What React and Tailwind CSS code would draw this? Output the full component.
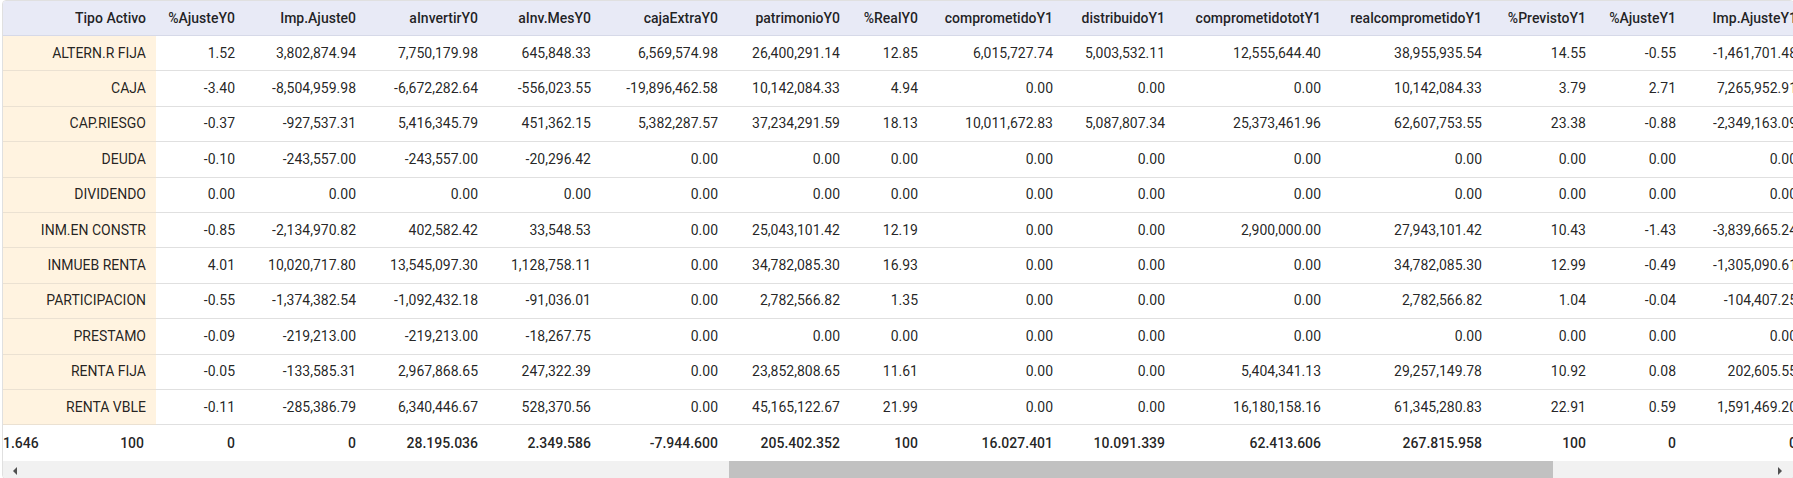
const columns = [
  { name: "Tipo Activo", w: "w-[153px]" },
  { name: "%AjusteY0", w: "w-[89px]" },
  { name: "Imp.Ajuste0", w: "w-[121px]" },
  { name: "aInvertirY0", w: "w-[122px]" },
  { name: "aInv.MesY0", w: "w-[113px]" },
  { name: "cajaExtraY0", w: "w-[127px]" },
  { name: "patrimonioY0", w: "w-[122px]" },
  { name: "%RealY0", w: "w-[78px]" },
  { name: "comprometidoY1", w: "w-[135px]" },
  { name: "distribuidoY1", w: "w-[112px]" },
  { name: "comprometidototY1", w: "w-[156px]" },
  { name: "realcomprometidoY1", w: "w-[161px]" },
  { name: "%PrevistoY1", w: "w-[104px]" },
  { name: "%AjusteY1", w: "w-[90px]" },
  { name: "Imp.AjusteY1", w: "w-[121px]" },
];

const Z = "0.00";

const rows = [
  ["ALTERN.R FIJA", "1.52", "3,802,874.94", "7,750,179.98", "645,848.33", "6,569,574.98", "26,400,291.14", "12.85", "6,015,727.74", "5,003,532.11", "12,555,644.40", "38,955,935.54", "14.55", "-0.55", "-1,461,701.48"],
  ["CAJA", "-3.40", "-8,504,959.98", "-6,672,282.64", "-556,023.55", "-19,896,462.58", "10,142,084.33", "4.94", Z, Z, Z, "10,142,084.33", "3.79", "2.71", "7,265,952.91"],
  ["CAP.RIESGO", "-0.37", "-927,537.31", "5,416,345.79", "451,362.15", "5,382,287.57", "37,234,291.59", "18.13", "10,011,672.83", "5,087,807.34", "25,373,461.96", "62,607,753.55", "23.38", "-0.88", "-2,349,163.09"],
  ["DEUDA", "-0.10", "-243,557.00", "-243,557.00", "-20,296.42", Z, Z, Z, Z, Z, Z, Z, Z, Z, Z],
  ["DIVIDENDO", Z, Z, Z, Z, Z, Z, Z, Z, Z, Z, Z, Z, Z, Z],
  ["INM.EN CONSTR", "-0.85", "-2,134,970.82", "402,582.42", "33,548.53", Z, "25,043,101.42", "12.19", Z, Z, "2,900,000.00", "27,943,101.42", "10.43", "-1.43", "-3,839,665.24"],
  ["INMUEB RENTA", "4.01", "10,020,717.80", "13,545,097.30", "1,128,758.11", Z, "34,782,085.30", "16.93", Z, Z, Z, "34,782,085.30", "12.99", "-0.49", "-1,305,090.61"],
  ["PARTICIPACION", "-0.55", "-1,374,382.54", "-1,092,432.18", "-91,036.01", Z, "2,782,566.82", "1.35", Z, Z, Z, "2,782,566.82", "1.04", "-0.04", "-104,407.25"],
  ["PRESTAMO", "-0.09", "-219,213.00", "-219,213.00", "-18,267.75", Z, Z, Z, Z, Z, Z, Z, Z, Z, Z],
  ["RENTA FIJA", "-0.05", "-133,585.31", "2,967,868.65", "247,322.39", Z, "23,852,808.65", "11.61", Z, Z, "5,404,341.13", "29,257,149.78", "10.92", "0.08", "202,605.55"],
  ["RENTA VBLE", "-0.11", "-285,386.79", "6,340,446.67", "528,370.56", Z, "45,165,122.67", "21.99", Z, Z, "16,180,158.16", "61,345,280.83", "22.91", "0.59", "1,591,469.20"],
];

const totals = ["100", "0", "0", "28.195.036", "2.349.586", "-7.944.600", "205.402.352", "100", "16.027.401", "10.091.339", "62.413.606", "267.815.958", "100", "0", "0"];

function App() {
  return (
    <div className="w-[1793px] h-[478px] overflow-hidden bg-white pl-[2px] font-[Roboto,sans-serif] text-[14px] text-[rgba(0,0,0,0.87)]">
      <div className="w-[1792px] border border-[#e0e0e0] rounded-[4px] overflow-hidden flex flex-col">
        {/* header */}
        <div className="flex h-[35px] shrink-0 bg-[#e8eaf6] border-b border-[#d6d9e8] font-medium">
          {columns.map((c) => (
            <div
              key={c.name}
              className={`${c.w} shrink-0 px-[10px] flex items-center justify-end whitespace-nowrap overflow-hidden`}
            >
              {c.name}
            </div>
          ))}
        </div>

        {/* body */}
        {rows.map((r) => (
          <div key={r[0]} className="flex h-[35.4px] shrink-0">
            {r.map((v, i) => (
              <div
                key={i}
                className={
                  i === 0
                    ? `${columns[i].w} shrink-0 px-[10px] flex items-center justify-end whitespace-nowrap bg-[#fff3e0] border-b border-[#ebe1d2]`
                    : `${columns[i].w} shrink-0 px-[10px] flex items-center justify-end whitespace-nowrap border-b border-[#e0e0e0]`
                }
              >
                {v}
              </div>
            ))}
          </div>
        ))}

        {/* footer totals */}
        <div className="flex h-[35.5px] shrink-0 font-medium">
          <div className="w-[153px] shrink-0 pr-[12px] flex items-center justify-between whitespace-nowrap">
            <span>1.646</span>
            <span>100</span>
          </div>
          {totals.slice(1).map((t, i) => (
            <div
              key={i}
              className={`${columns[i + 1].w} shrink-0 px-[10px] flex items-center justify-end whitespace-nowrap`}
            >
              {t}
            </div>
          ))}
        </div>

        {/* horizontal scrollbar */}
        <div className="flex h-[17px] shrink-0 bg-[#f1f1f1]">
          <div className="w-[23px] shrink-0 flex items-center justify-center pt-[4px]">
            <div className="w-0 h-0 border-y-[4px] border-y-transparent border-r-[4px] border-r-[#505050]"></div>
          </div>
          <div className="w-[703px] shrink-0"></div>
          <div className="w-[824px] shrink-0 bg-[#c1c1c1]"></div>
          <div className="flex-1"></div>
          <div className="w-[26px] shrink-0 flex items-center justify-center pt-[4px]">
            <div className="w-0 h-0 border-y-[4px] border-y-transparent border-l-[4px] border-l-[#505050]"></div>
          </div>
        </div>
      </div>
    </div>
  );
}

export default App;
